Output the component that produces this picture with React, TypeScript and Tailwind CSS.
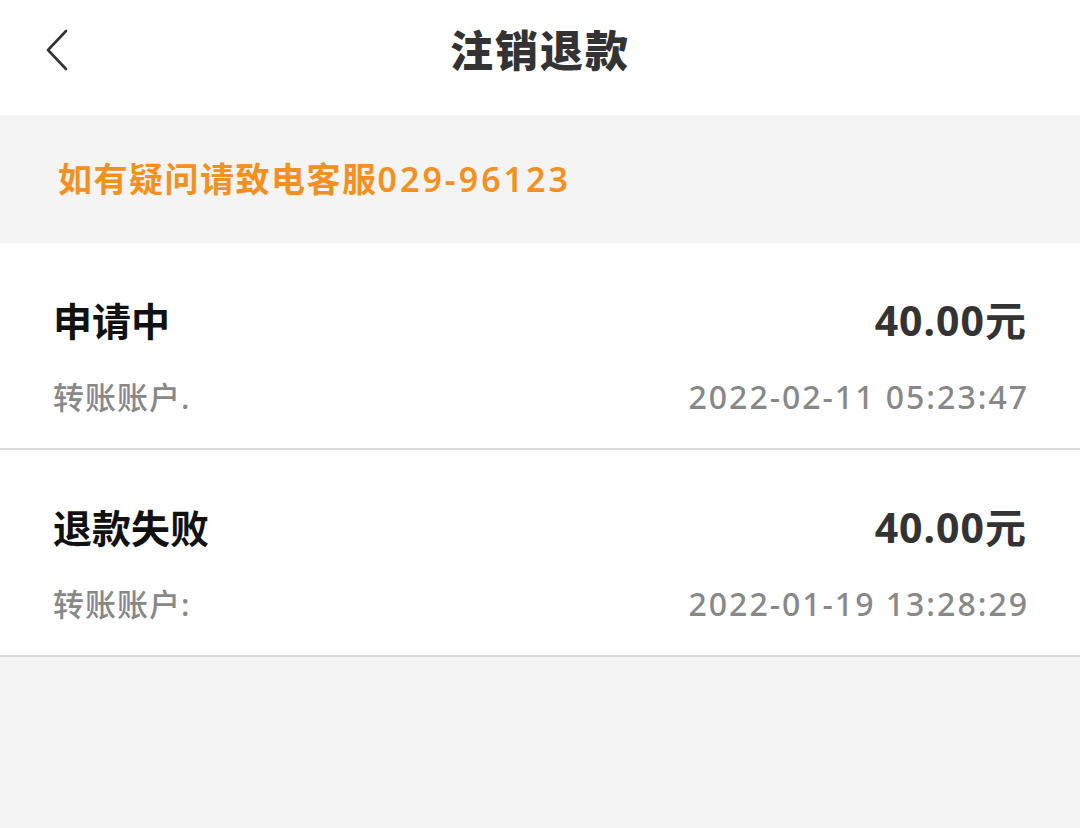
import React from 'react';

interface Refund {
  id: string;
  status: string;
  amount: string;
  account: string;
  time: string;
}

const refunds: Refund[] = [
  { id: '1', status: '申请中', amount: '40.00元', account: '转账账户.', time: '2022-02-11 05:23:47' },
  { id: '2', status: '退款失败', amount: '40.00元', account: '转账账户:', time: '2022-01-19 13:28:29' },
];

const BackIcon = () => (
  <svg width="26" height="44" viewBox="0 0 26 44" fill="none">
    <path d="M22 3 L4 22 L22 41" stroke="#333" strokeWidth="2.6" strokeLinecap="round" strokeLinejoin="round" />
  </svg>
);

const App: React.FC = () => {
  return (
    <div
      className="w-[1080px] h-[828px] bg-[#f4f4f4] flex flex-col"
      style={{ fontFamily: '"Noto Sans", "Noto Sans CJK SC", sans-serif' }}
    >
      {/* Header */}
      <div className="h-[115px] bg-white flex items-center relative shrink-0">
        <div className="absolute left-[44px] top-[28px]">
          <BackIcon />
        </div>
        <h1 className="w-full text-center text-[43px] font-black text-[#333] leading-none tracking-[2px] -mt-[14px]">
          注销退款
        </h1>
      </div>

      {/* Notice */}
      <div className="h-[128px] flex items-center px-[58px] shrink-0">
        <p className="text-[34px] font-semibold text-[#f39020] leading-none tracking-[1.5px]">
          如有疑问请致电客服<span className="tracking-[3px]">029-96123</span>
        </p>
      </div>

      {/* List */}
      <div className="flex flex-col">
        {refunds.map((r) => (
          <div key={r.id} className="h-[207px] bg-white border-b-[2px] border-[#d9d9d9] px-[53px] flex flex-col">
            <div className="flex justify-between items-center mt-[56px] h-[42px]">
              <span className="text-[39px] font-bold text-[#111] leading-none">{r.status}</span>
              <span className="text-[41px] font-bold text-[#333] leading-none tracking-[1px]">{r.amount}</span>
            </div>
            <div className="flex justify-between items-center mt-[38px] h-[36px]">
              <span className="text-[31px] font-medium text-[#888] leading-none tracking-[1px]">{r.account}</span>
              <span className="text-[32px] font-medium text-[#888] leading-none tracking-[2px] -mr-[2px]">{r.time}</span>
            </div>
          </div>
        ))}
      </div>
    </div>
  );
};

export default App;
